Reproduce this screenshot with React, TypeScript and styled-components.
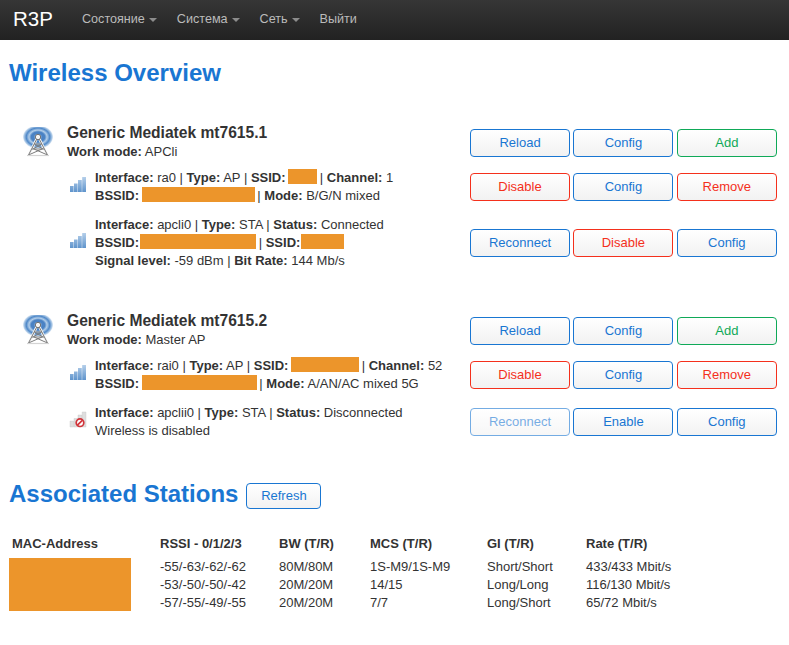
import React from 'react';
import styled, { createGlobalStyle } from 'styled-components';

type Tone = 'blue' | 'red' | 'green';

const toneColors: Record<Tone, string> = {
  blue: '#1976d2',
  red: '#f4301c',
  green: '#0fa958',
};

interface ButtonSpec {
  label: string;
  tone: Tone;
  muted?: boolean;
}

const BARS = 'M0 9h3.6v6H0zM4 6.5h3.6V15H4zM8 3h3.8v12H8zM12.2 0H16v15h-3.8z';

const SignalIcon: React.FC = () => (
  <svg width="16" height="15" viewBox="0 0 16 15">
    <defs>
      <linearGradient id="bar" x1="0" y1="0" x2="0" y2="1">
        <stop offset="0" stopColor="#b5cfea" />
        <stop offset="1" stopColor="#5f94cc" />
      </linearGradient>
    </defs>
    <path d={BARS} fill="url(#bar)" />
  </svg>
);

const DisabledIcon: React.FC = () => (
  <svg width="16" height="15" viewBox="0 0 16 15" overflow="visible">
    <path d={BARS} fill="#dedede" stroke="#c4c4c4" strokeWidth="0.4" />
    <circle cx="10" cy="10.7" r="3.8" fill="#fff" stroke="#d1343a" strokeWidth="1.7" />
    <path d="M7.4 13.2l5.2-5" stroke="#d1343a" strokeWidth="1.7" />
  </svg>
);

const TowerIcon: React.FC = () => (
  <svg width="32" height="32" viewBox="0 0 32 32">
    <defs>
      <radialGradient id="wave">
        <stop offset="0" stopColor="#e4eef8" />
        <stop offset="0.3" stopColor="#4a82c4" />
        <stop offset="0.45" stopColor="#4a82c4" />
        <stop offset="0.6" stopColor="#b4cfea" />
        <stop offset="0.78" stopColor="#4f88c8" />
        <stop offset="0.92" stopColor="#a5c4e4" />
        <stop offset="1" stopColor="#e0ebf6" />
      </radialGradient>
    </defs>
    <ellipse cx="16" cy="10" rx="15" ry="11.5" fill="url(#wave)" />
    <path d="M15 11L7 28M17 11L25 28" stroke="#f4f4f4" strokeWidth="2.6" fill="none" />
    <path d="M14.8 12L6.5 28M17.2 12L25.5 28M12.4 17h7.2M10 22h12M6.5 28L20 22M25.5 28L12 22M12.4 17L21 22M19.6 17L11 22" stroke="#7c7c7c" strokeWidth="1" fill="none" />
    <path d="M5 28.5h22" stroke="#d4d4d4" strokeWidth="1.2" />
    <circle cx="16" cy="10" r="2.7" fill="#f4f4f4" stroke="#666" strokeWidth="0.9" />
  </svg>
);

const App: React.FC = () => (
  <>
    <GlobalStyle />
    <NavBar>
      <Brand>R3P</Brand>
      <NavItem>Состояние<Caret /></NavItem>
      <NavItem>Система<Caret /></NavItem>
      <NavItem>Сеть<Caret /></NavItem>
      <NavItem>Выйти</NavItem>
    </NavBar>
    <Main>
      <PageTitle>Wireless Overview</PageTitle>

      <Device>
        <HeadRow>
          <TowerSlot><TowerIcon /></TowerSlot>
          <HeadText>
            <DeviceName>Generic Mediatek mt7615.1</DeviceName>
            <div><b>Work mode:</b> APCli</div>
          </HeadText>
          <Actions items={[
            { label: 'Reload', tone: 'blue' },
            { label: 'Config', tone: 'blue' },
            { label: 'Add', tone: 'green' },
          ]} />
        </HeadRow>
        <IfaceRow>
          <SignalSlot><SignalIcon /></SignalSlot>
          <IfaceText>
            <div><b>Interface:</b> ra0 | <b>Type:</b> AP | <b>SSID:</b> <Redacted $w={29} /> | <b>Channel:</b> 1</div>
            <div><b>BSSID:</b> <Redacted $w={113} /> | <b>Mode:</b> B/G/N mixed</div>
          </IfaceText>
          <Actions items={[
            { label: 'Disable', tone: 'red' },
            { label: 'Config', tone: 'blue' },
            { label: 'Remove', tone: 'red' },
          ]} />
        </IfaceRow>
        <IfaceRow $station>
          <SignalSlot><SignalIcon /></SignalSlot>
          <IfaceText>
            <div><b>Interface:</b> apcli0 | <b>Type:</b> STA | <b>Status:</b> Connected</div>
            <div><b>BSSID:</b><Redacted $w={116} $flush /> | <b>SSID:</b><Redacted $w={43} $flush /></div>
            <div><b>Signal level:</b> -59 dBm | <b>Bit Rate:</b> 144 Mb/s</div>
          </IfaceText>
          <Actions items={[
            { label: 'Reconnect', tone: 'blue' },
            { label: 'Disable', tone: 'red' },
            { label: 'Config', tone: 'blue' },
          ]} />
        </IfaceRow>
      </Device>

      <Device>
        <HeadRow>
          <TowerSlot><TowerIcon /></TowerSlot>
          <HeadText>
            <DeviceName>Generic Mediatek mt7615.2</DeviceName>
            <div><b>Work mode:</b> Master AP</div>
          </HeadText>
          <Actions items={[
            { label: 'Reload', tone: 'blue' },
            { label: 'Config', tone: 'blue' },
            { label: 'Add', tone: 'green' },
          ]} />
        </HeadRow>
        <IfaceRow>
          <SignalSlot><SignalIcon /></SignalSlot>
          <IfaceText>
            <div><b>Interface:</b> rai0 | <b>Type:</b> AP | <b>SSID:</b> <Redacted $w={68} /> | <b>Channel:</b> 52</div>
            <div><b>BSSID:</b> <Redacted $w={115} /> | <b>Mode:</b> A/AN/AC mixed 5G</div>
          </IfaceText>
          <Actions items={[
            { label: 'Disable', tone: 'red' },
            { label: 'Config', tone: 'blue' },
            { label: 'Remove', tone: 'red' },
          ]} />
        </IfaceRow>
        <IfaceRow $station>
          <SignalSlot><DisabledIcon /></SignalSlot>
          <IfaceText>
            <div><b>Interface:</b> apclii0 | <b>Type:</b> STA | <b>Status:</b> Disconnected</div>
            <div>Wireless is disabled</div>
          </IfaceText>
          <Actions items={[
            { label: 'Reconnect', tone: 'blue', muted: true },
            { label: 'Enable', tone: 'blue' },
            { label: 'Config', tone: 'blue' },
          ]} />
        </IfaceRow>
      </Device>

      <StationsHeader>
        <StationsTitle>Associated Stations</StationsTitle>
        <RefreshButton $tone="blue">Refresh</RefreshButton>
      </StationsHeader>

      <StationsTable>
        <thead>
          <tr>
            <MacHead>MAC-Address</MacHead>
            <th>RSSI - 0/1/2/3</th>
            <th>BW (T/R)</th>
            <th>MCS (T/R)</th>
            <th>GI (T/R)</th>
            <th>Rate (T/R)</th>
          </tr>
        </thead>
        <tbody>
          <tr>
            <td rowSpan={3}><MacBlock /></td>
            <td>-55/-63/-62/-62</td>
            <td>80M/80M</td>
            <td>1S-M9/1S-M9</td>
            <td>Short/Short</td>
            <td>433/433 Mbit/s</td>
          </tr>
          <tr>
            <td>-53/-50/-50/-42</td>
            <td>20M/20M</td>
            <td>14/15</td>
            <td>Long/Long</td>
            <td>116/130 Mbit/s</td>
          </tr>
          <tr>
            <td>-57/-55/-49/-55</td>
            <td>20M/20M</td>
            <td>7/7</td>
            <td>Long/Short</td>
            <td>65/72 Mbit/s</td>
          </tr>
        </tbody>
      </StationsTable>
    </Main>
  </>
);

const Actions: React.FC<{ items: ButtonSpec[] }> = ({ items }) => (
  <ActionGroup>
    {items.map((item, i) => (
      <ActionButton key={i} $tone={item.tone} $muted={item.muted}>{item.label}</ActionButton>
    ))}
  </ActionGroup>
);

const GlobalStyle = createGlobalStyle`
  html, body {
    margin: 0;
    padding: 0;
    background: #fff;
  }
  body {
    font-family: "Liberation Sans", Arial, sans-serif;
    font-size: 13px;
    line-height: 18px;
    color: #333;
  }
`;

const NavBar = styled.nav`
  display: flex;
  align-items: center;
  gap: 20px;
  height: 40px;
  padding-left: 13px;
  background: linear-gradient(to bottom, #363636, #222);
`;

const Brand = styled.div`
  width: 49px;
  font-size: 20.5px;
  color: #fff;
  padding-bottom: 2px;
`;

const NavItem = styled.div`
  display: flex;
  align-items: center;
  font-size: 12.6px;
  color: #bbb;
  padding-bottom: 2px;
`;

const Caret = styled.span`
  width: 0;
  height: 0;
  margin-left: 4px;
  margin-top: 1px;
  border-left: 4px solid transparent;
  border-right: 4px solid transparent;
  border-top: 4px solid #8c8c8c;
`;

const Main = styled.main`
  padding: 0 9px;
`;

const PageTitle = styled.h2`
  margin: 0;
  padding-top: 18px;
  height: 66px;
  box-sizing: border-box;
  font-size: 24px;
  line-height: 29px;
  font-weight: bold;
  color: #1976d2;
`;

const Device = styled.section`
  padding-top: 19px;
  padding-bottom: 24px;
`;

const HeadRow = styled.div`
  display: flex;
  align-items: center;
`;

const IfaceRow = styled.div<{ $station?: boolean }>`
  display: flex;
  align-items: center;
  margin-top: ${(p) => (p.$station ? '11px' : '8px')};
`;

const TowerSlot = styled.div`
  display: flex;
  width: 32px;
  margin-left: 13px;
  margin-right: 13px;
`;

const SignalSlot = styled.div`
  display: flex;
  width: 16px;
  margin-left: 61px;
  margin-right: 9px;
  margin-bottom: 5px;
`;

const HeadText = styled.div`
  flex: 1;
  min-width: 0;
`;

const IfaceText = styled.div`
  flex: 1;
  min-width: 0;
`;

const DeviceName = styled.div`
  font-size: 15.6px;
  line-height: 15px;
  margin-bottom: 3px;
  font-weight: bold;
`;

const Redacted = styled.span<{ $w: number; $flush?: boolean }>`
  display: inline-block;
  width: ${(p) => p.$w}px;
  height: 15px;
  margin: ${(p) => (p.$flush ? '0 -1px 0 1px' : '0 -1px')};
  vertical-align: -2px;
  background: #ec952b;
`;

const ActionGroup = styled.div`
  display: grid;
  grid-template-columns: 100px 100px 100px;
  column-gap: 3.4px;
  margin-right: 3.2px;
`;

const ActionButton = styled.button<{ $tone: Tone; $muted?: boolean }>`
  height: 28px;
  padding: 0 0 2px;
  font-family: inherit;
  font-size: 13px;
  border: 1px solid ${(p) => toneColors[p.$tone]};
  border-radius: 4px;
  color: ${(p) => toneColors[p.$tone]};
  background: linear-gradient(to bottom, #fff, #f2f2f2);
  opacity: ${(p) => (p.$muted ? 0.6 : 1)};
`;

const StationsHeader = styled.div`
  display: flex;
  align-items: center;
  gap: 8px;
  margin-top: 15px;
`;

const StationsTitle = styled.h2`
  margin: 0 0 2px;
  font-size: 24px;
  line-height: 27px;
  font-weight: bold;
  color: #1976d2;
`;

const RefreshButton = styled(ActionButton)`
  width: 75px;
  height: 26px;
  margin-top: 4px;
`;

const StationsTable = styled.table`
  margin-top: 26px;
  border-collapse: collapse;
  table-layout: fixed;
  width: 700px;

  th {
    padding: 0 0 5px;
    text-align: left;
    font-weight: bold;
    width: auto;
  }
  td {
    padding: 0;
    vertical-align: top;
  }
  th:nth-child(2) { width: 119px; }
  th:nth-child(3) { width: 91px; }
  th:nth-child(4) { width: 117px; }
  th:nth-child(5) { width: 99px; }
`;

const MacHead = styled.th`
  && {
    width: 151px;
    padding-left: 3px;
    box-sizing: border-box;
  }
`;

const MacBlock = styled.div`
  width: 122px;
  height: 53px;
  background: #ec952b;
`;

export default App;
